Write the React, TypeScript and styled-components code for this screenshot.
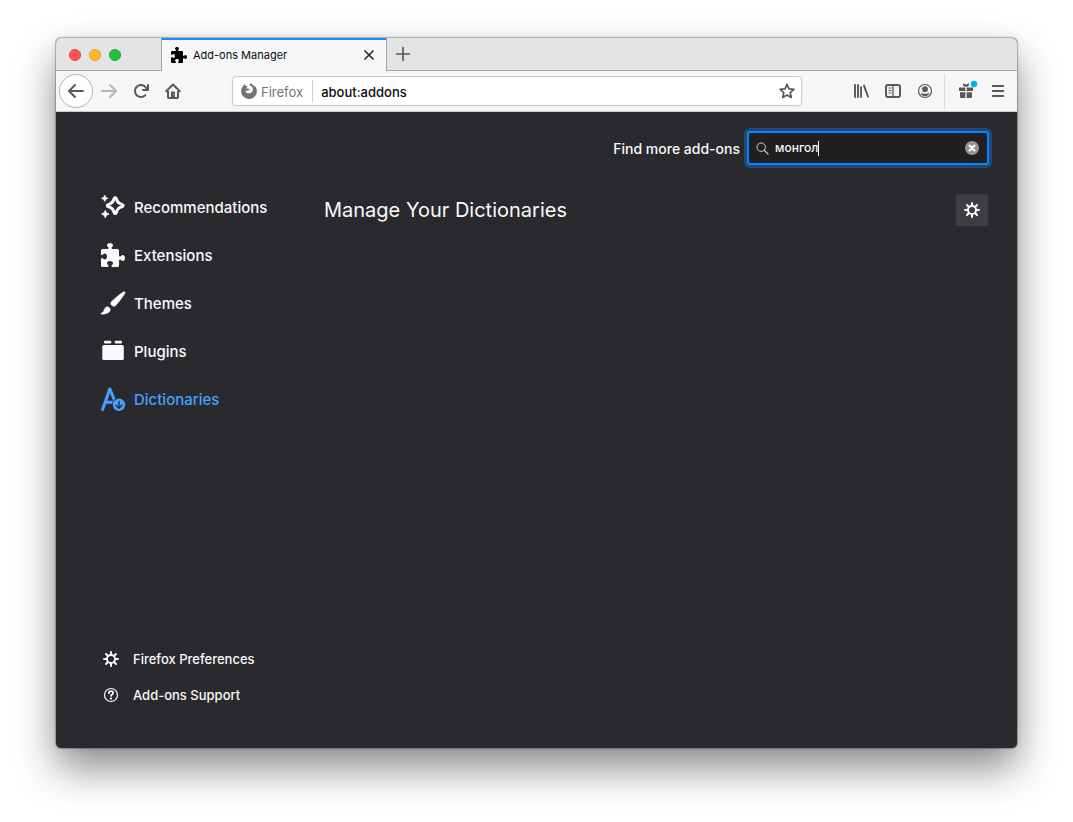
import React from "react";
import styled, { createGlobalStyle, css } from "styled-components";

const GlobalStyle = createGlobalStyle`
  *, *::before, *::after { box-sizing: border-box; }
  body {
    margin: 0;
    background: #fff;
    font-family: Inter, "Liberation Sans", sans-serif;
  }
  button, input { font: inherit; color: inherit; margin: 0; padding: 0; border: 0; background: none; }
  svg { display: block; flex: none; overflow: visible; }
`;

const Desktop = styled.div`
  display: flex;
  min-height: 100vh;
  padding: 38px 56px 74px;
`;

const BrowserWindow = styled.div`
  flex: 1;
  min-width: 0;
  display: flex;
  flex-direction: column;
  border-radius: 5px;
  overflow: hidden;
  background: #2a2a2e;
  box-shadow: 0 0 1px 1px rgba(0, 0, 0, 0.26), 0 0 8px rgba(0, 0, 0, 0.06), 0 20px 40px rgba(0, 0, 0, 0.46);
`;

/* Tab strip */
const TabStrip = styled.div`
  display: flex;
  height: 33px;
  background: #e2e3e5;
`;

const WindowControls = styled.div`
  display: flex;
  align-items: center;
  gap: 8px;
  width: 105px;
  padding: 1px 0 0 13px;
  border-bottom: 1px solid #a5a6a9;
`;

const Light = styled.button<{ $fill: string; $edge: string }>`
  width: 12px;
  height: 12px;
  border-radius: 50%;
  background: ${(p) => p.$fill};
  border: 1px solid ${(p) => p.$edge};
`;

const Tab = styled.div`
  display: flex;
  align-items: center;
  width: 226px;
  padding: 0 9px;
  gap: 6px;
  background: #f5f6f7;
  border: solid #a5a6a9;
  border-width: 0 1px;
  box-shadow: inset 0 2px #2187f7;
`;

const TabTitle = styled.span`
  flex: 1;
  font-size: 11px;
  line-height: 16px;
  color: #0c0c0d;
`;

const TabFill = styled.div`
  flex: 1;
  display: flex;
  align-items: center;
  padding-left: 8px;
  border-bottom: 1px solid #a5a6a9;
`;

const IconButton = styled.button<{ $size?: number; $faded?: boolean }>`
  display: flex;
  align-items: center;
  justify-content: center;
  flex: none;
  width: ${(p) => p.$size ?? 32}px;
  height: ${(p) => p.$size ?? 32}px;
  color: #58585a;
  opacity: ${(p) => (p.$faded ? 0.4 : 1)};
`;

const CloseButton = styled(IconButton)`
  color: #2a2a2b;
`;

/* Navigation toolbar */
const Toolbar = styled.div`
  display: flex;
  align-items: center;
  height: 41px;
  padding: 0 3px;
  background: #f5f6f7;
  border-bottom: 1px solid #cccccd;
`;

const BackButton = styled(IconButton)`
  border: 1px solid #b5b5b7;
  border-radius: 50%;
  background: #fdfdfd;
`;

const UrlBar = styled.div`
  flex: 1;
  display: flex;
  align-items: center;
  height: 30px;
  margin: 0 43px;
  padding: 0 6px 0 8px;
  background: #fff;
  border: 1px solid #c9c9cb;
  border-radius: 4px;
  box-shadow: 0 1px 3px rgba(0, 0, 0, 0.05);
`;

const Identity = styled.span`
  display: flex;
  align-items: center;
  gap: 4px;
  height: 22px;
  padding-right: 9px;
  border-right: 1px solid #d3d3d5;
  font-size: 13px;
  line-height: 20px;
  color: #737373;
`;

const IdentityName = styled.span`
  padding-top: 2px;
`;

const UrlInput = styled.input`
  flex: 1;
  min-width: 0;
  margin-left: 8px;
  padding-top: 2px;
  font-size: 13px;
  font-weight: 500;
  line-height: 20px;
  color: #0c0c0d;
  outline: none;
`;

const Divider = styled.span`
  width: 1px;
  height: 34px;
  margin: 0 5px 0 3px;
  background: #d9d9db;
`;

/* Page */
const Page = styled.div`
  flex: 1;
  display: flex;
  color: #f9f9fa;
`;

const Sidebar = styled.aside`
  display: flex;
  flex-direction: column;
  width: 268px;
  padding: 71px 0 35px 45px;
`;

const Categories = styled.nav`
  display: flex;
  flex-direction: column;
`;

const Category = styled.button<{ $selected?: boolean }>`
  display: flex;
  align-items: center;
  gap: 9px;
  height: 48px;
  font-size: 15px;
  font-weight: 500;
  line-height: 24px;
  ${(p) => p.$selected && css`color: #45a1ff;`}
`;

const CategoryName = styled.span`
  padding-top: 2px;
`;

const FooterLinks = styled.nav`
  display: flex;
  flex-direction: column;
  margin-top: auto;
  padding-left: 2px;
`;

const FooterLink = styled.a`
  display: flex;
  align-items: center;
  gap: 14px;
  height: 36px;
  font-size: 13px;
  font-weight: 500;
  line-height: 20px;
  color: inherit;
  text-decoration: none;
`;

const Main = styled.main`
  flex: 1;
  min-width: 0;
  padding: 20px 29px 0 0;
`;

const SearchRow = styled.form`
  display: flex;
  align-items: center;
  justify-content: flex-end;
  gap: 8px;
`;

const SearchLabel = styled.label`
  padding-top: 2px;
  font-size: 14px;
  font-weight: 500;
  line-height: 20px;
`;

const SearchBox = styled.div`
  display: flex;
  align-items: center;
  width: 240px;
  height: 32px;
  padding: 0 7px;
  background: #202023;
  border: 1px solid #0a84ff;
  border-radius: 2px;
  box-shadow: 0 0 0 1px #0a84ff, 0 0 0 4px rgba(10, 132, 255, 0.35);
`;

const SearchInput = styled.input`
  field-sizing: content;
  margin-left: 6px;
  font-size: 12px;
  font-weight: 500;
  line-height: 16px;
  outline: none;
  caret-color: transparent;
`;

const Caret = styled.span`
  width: 1px;
  height: 15px;
  background: #fff;
`;

const ClearButton = styled(IconButton)`
  margin-left: auto;
`;

const HeadingRow = styled.div`
  display: flex;
  align-items: center;
  justify-content: space-between;
  margin-top: 30px;
`;

const Heading = styled.h1`
  margin: 0;
  font-size: 20px;
  line-height: 32px;
  font-weight: 400;
`;

const OptionsButton = styled(IconButton)`
  color: #f9f9fa;
  background: #3e3e42;
  border-radius: 2px;
`;

/* Icons */
type IconProps = { size?: number; box?: number; children: React.ReactNode };
const Icon = ({ size = 16, box = 16, children }: IconProps) => (
  <svg width={size} height={size} viewBox={`0 0 ${box} ${box}`} fill="currentColor" aria-hidden="true">
    {children}
  </svg>
);

const arrowPath =
  "M15 7H3.414l4.293-4.293a1 1 0 0 0-1.414-1.414l-6 6a1 1 0 0 0 0 1.414l6 6a1 1 0 0 0 1.414-1.414L3.414 9H15a1 1 0 0 0 0-2z";

const BackIcon = () => <Icon><path d={arrowPath} /></Icon>;
const ForwardIcon = () => <Icon><path d={arrowPath} transform="matrix(-1 0 0 1 16 0)" /></Icon>;
const ReloadIcon = () => (
  <Icon>
    <path d="M15 1a1 1 0 0 0-1 1v2.418A6.995 6.995 0 1 0 8 15a6.954 6.954 0 0 0 4.95-2.05 1 1 0 0 0-1.414-1.414A5.019 5.019 0 1 1 12.549 6H10a1 1 0 0 0 0 2h5a1 1 0 0 0 1-1V2a1 1 0 0 0-1-1z" />
  </Icon>
);
const HomeIcon = () => (
  <Icon>
    <path d="M1.2 8.3 8 1.5l6.8 6.8" fill="none" stroke="currentColor" strokeWidth="2" strokeLinecap="round" strokeLinejoin="round" />
    <path d="M3 8v6.2a.8.8 0 0 0 .8.8h8.400a.8.8 0 0 0 .8-.8V8" fill="none" stroke="currentColor" strokeWidth="2" />
    <path d="M6 14.500V9.500a1 1 0 0 1 1-1h2a1 1 0 0 1 1 1v5z" />
    <circle cx="8.700" cy="11.500" r=".6" fill="#f5f6f7" />
  </Icon>
);
const PuzzleIcon = ({ size }: { size: number }) => (
  <Icon size={size}>
    <path d="M14.5 8c-.971 0-1 1-1.75 1a.765.765 0 0 1-.75-.75V5a1 1 0 0 0-1-1H7.75A.765.765 0 0 1 7 3.25c0-.75 1-.779 1-1.75C8 .635 7.1 0 6 0S4 .635 4 1.5c0 .971 1 1 1 1.75a.765.765 0 0 1-.75.75H1a1 1 0 0 0-1 1v2.250A.765.765 0 0 0 .75 8c.75 0 .779-1 1.750-1C3.365 7 4 7.900 4 9s-.635 2-1.500 2c-.971 0-1-1-1.750-1a.765.765 0 0 0-.75.75V15a1 1 0 0 0 1 1h3.250a.765.765 0 0 0 .75-.75c0-.75-1-.779-1-1.750 0-.865.9-1.500 2-1.500s2 .635 2 1.500c0 .971-1 1-1 1.750a.765.765 0 0 0 .75.75H11a1 1 0 0 0 1-1v-3.250a.765.765 0 0 1 .75-.75c.75 0 .779 1 1.750 1 .865 0 1.500-.9 1.500-2s-.635-2-1.500-2z" />
  </Icon>
);
const CrossIcon = () => (
  <Icon size={10} box={10}>
    <path d="m1 1 8 8M9 1 1 9" stroke="currentColor" strokeWidth="1.700" strokeLinecap="round" />
  </Icon>
);
const PlusIcon = () => (
  <Icon><path d="M8 1.700v12.600M1.700 8h12.600" stroke="currentColor" strokeWidth="1.700" strokeLinecap="round" /></Icon>
);
const FirefoxIcon = () => (
  <Icon>
    <path d="M15.800 7.300c-.2-2-1.300-4-2.700-5.100.3.600.5 1.100.5 1.600C12.600 2.100 10.900 1.400 9.900 0c-.7.5-1.200 1.500-1.300 2.600 1.700.3 3 1.500 3.300 3.200.400 2.300-1.200 4.300-3.500 4.500-2.200.1-3.800-1.200-4-2.900.6.500 1.500.6 2.200.2.7-.3 1.100-.8 1.700-.8.4 0 .6-.4.3-.7-.5-.6-1.200-.8-1.900-.6-.6.200-1.100.2-1.600-.2 0-.5.900-1 1.400-1.300.1-.5.100-.9-.1-1.100-.9 0-1.600-.1-2.200-.5-.4-.4-.6-1-.6-1.500C2.800 1.400 2.300 2.200 2.200 3 1 4.300.1 6.100.1 8.100.1 12.500 3.700 16 8 16c4.600 0 8.300-3.900 7.800-8.700z" />
  </Icon>
);
const StarIcon = () => (
  <Icon>
    <path d="m8 1.300 2 4.500 4.900.5-3.700 3.300 1.100 4.900L8 12l-4.300 2.500 1.100-4.900L1.100 6.300 6 5.800z" fill="none" stroke="currentColor" strokeWidth="1.700" strokeLinejoin="round" />
  </Icon>
);
const LibraryIcon = () => (
  <Icon>
    <path d="M2 2v12M5 2v12M8 4.200v9.800M11 2.600l4 11.200" fill="none" stroke="currentColor" strokeWidth="1.900" strokeLinecap="round" />
  </Icon>
);
const SidebarIcon = () => (
  <Icon>
    <rect x="1" y="2" width="14" height="12" rx="2" fill="none" stroke="currentColor" strokeWidth="2" />
    <path d="M8 2v12" stroke="currentColor" strokeWidth="1.300" />
    <path d="M3.500 5h3M3.500 7.500h3M3.500 10h3" stroke="currentColor" />
  </Icon>
);
const AccountIcon = () => (
  <Icon>
    <circle cx="8" cy="8" r="6.500" fill="none" stroke="currentColor" strokeWidth="1.200" />
    <circle cx="8" cy="6.200" r="2.900" />
    <path d="M3.600 9.700c1 .6 2.500 1 4.400 1s3.400-.4 4.400-1c-.4 2-2.200 3.500-4.400 3.500s-4-1.500-4.400-3.500z" />
  </Icon>
);
const GiftIcon = () => (
  <Icon size={20} box={20}>
    <path d="M3 6.500h6.300V10H3zM10.700 6.500H17V10h-6.300zM4 11.200h5.300V17H5a1 1 0 0 1-1-1zM10.700 11.200H16V16a1 1 0 0 1-1 1h-4.300z" />
    <path d="M7 2.500c1 0 1.900.4 2.500 1h1c.6-.6 1.500-1 2.500-1 .4 1.600-.6 3.200-2.300 3.200H9.300C7.600 5.700 6.600 4.100 7 2.500z" />
    <circle cx="18" cy="3" r="3.200" fill="#00b0fa" />
  </Icon>
);
const MenuIcon = () => (
  <Icon><path d="M2.800 3h10.400M2.800 8h10.400M2.800 13h10.400" stroke="currentColor" strokeWidth="2" strokeLinecap="round" /></Icon>
);
const GearIcon = () => (
  <Icon>
    <circle cx="8" cy="8" r="4.100" fill="none" stroke="currentColor" strokeWidth="2" />
    <path
      d="M8 1v2.800M8 12.200V15M1 8h2.800M12.200 8H15M3 3l2 2M11 11l2 2M13 3l-2 2M5 11l-2 2"
      stroke="currentColor"
      strokeWidth="2"
      strokeLinecap="round"
    />
  </Icon>
);
const HelpIcon = () => (
  <Icon>
    <circle cx="8" cy="8" r="6.500" fill="none" stroke="currentColor" strokeWidth="1.200" />
    <path d="M5.900 6.200C5.900 4.900 6.800 4.100 8 4.100s2.100.8 2.100 1.900c0 1.500-2.100 1.600-2.100 3" fill="none" stroke="currentColor" strokeWidth="1.700" strokeLinecap="round" />
    <circle cx="8" cy="11.600" r="1.100" />
  </Icon>
);
const SearchIcon = () => (
  <Icon size={13} box={13}>
    <path d="M8.300 8.300 12 12" stroke="#d0d0d1" strokeWidth="1.200" strokeLinecap="round" />
    <circle cx="5.200" cy="5.200" r="4.200" fill="none" stroke="#d0d0d1" />
  </Icon>
);
const ClearIcon = () => (
  <Icon>
    <circle cx="8" cy="8" r="7" fill="#949496" />
    <path d="m5.500 5.500 5 5M10.500 5.500l-5 5" stroke="#fff" strokeWidth="1.900" strokeLinecap="round" />
  </Icon>
);
const SparkleIcon = () => (
  <Icon size={24} box={24}>
    <path d="M14.200 2.700c.7 0 1 .5 1.200 1.200.9 3.400 2.100 4.600 5.500 5.500 1.700.4 1.700 2 0 2.400-3.400.9-4.600 2.100-5.500 5.500-.4 1.700-2 1.700-2.400 0-.9-3.400-2.100-4.600-5.500-5.500-1.700-.4-1.700-2 0-2.400 3.400-.9 4.600-2.100 5.500-5.500.2-.7.500-1.200 1.200-1.200z" fill="none" stroke="currentColor" strokeWidth="3" />
    <path d="M3.700.3 4.700 2.400l2.100.9-2.100 1-1 2.100-1-2.100-2.100-1 2.100-.9zM4.300 15.400l1.200 2.500 2.500 1.100-2.500 1.200-1.200 2.500-1.200-2.500L.6 19l2.500-1.100z" stroke="currentColor" strokeWidth=".9" strokeLinejoin="round" />
  </Icon>
);
const BrushIcon = () => (
  <Icon size={24} box={24}>
    <path d="M22.300.9c1.300-.7 2.300.3 1.600 1.600-2.600 4-6 8.500-9.200 11.900-.8.800-1.700 1-2.700.7-1-.3-1.900-1.200-2.200-2.200-.2-.8 0-1.600.7-2.300C14 7.300 18.300 3.400 22.300.9z" stroke="currentColor" strokeWidth=".5" />
    <path d="M5.400 15.900c1.500-.7 3.500.5 3.800 2.200.3 1.900-.9 3.300-2.900 4.100-1.900.8-4 1.200-5.700 1-.8-.1-.8-1 0-1.300 1.500-.6 2-1.400 2.500-2.800.5-1.500 1-2.600 2.300-3.200z" stroke="currentColor" strokeWidth=".5" />
  </Icon>
);
const PluginIcon = () => (
  <Icon size={24} box={24}>
    <rect x="3" y="1.700" width="7.300" height="2.800" rx="1.200" />
    <rect x="13.700" y="1.700" width="7.300" height="2.800" rx="1.200" />
    <rect x="1.300" y="6" width="21.500" height="15" rx="1.500" />
  </Icon>
);
const DictionaryIcon = () => (
  <Icon size={24} box={24}>
    <path d="M1.600 22.600 8.800 1.900 13.600 13.500M4 15.300h8" fill="none" stroke="currentColor" strokeWidth="3" strokeLinecap="round" strokeLinejoin="round" />
    <circle cx="18" cy="17.800" r="7" fill="#2a2a2e" />
    <circle cx="18" cy="17.800" r="6.200" />
    <path d="M18 14.300v6.400M15 18.300l3 2.900 3-2.900" fill="none" stroke="#2a2a2e" strokeWidth="1.300" strokeLinecap="round" strokeLinejoin="round" />
  </Icon>
);

const categories = [
  { label: "Recommendations", icon: <SparkleIcon /> },
  { label: "Extensions", icon: <PuzzleIcon size={24} /> },
  { label: "Themes", icon: <BrushIcon /> },
  { label: "Plugins", icon: <PluginIcon /> },
  { label: "Dictionaries", icon: <DictionaryIcon />, selected: true },
];

export default function App() {
  return (
    <Desktop>
      <GlobalStyle />
      <BrowserWindow>
        <TabStrip>
          <WindowControls>
            <Light $fill="#ff544d" $edge="#e2453f" aria-label="Close window" />
            <Light $fill="#ffb429" $edge="#e09e22" aria-label="Minimize window" />
            <Light $fill="#25c138" $edge="#1cab2c" aria-label="Zoom window" />
          </WindowControls>
          <Tab>
            <PuzzleIcon size={16} />
            <TabTitle>Add-ons Manager</TabTitle>
            <CloseButton $size={16} aria-label="Close tab"><CrossIcon /></CloseButton>
          </Tab>
          <TabFill>
            <IconButton $size={16} aria-label="New tab"><PlusIcon /></IconButton>
          </TabFill>
        </TabStrip>

        <Toolbar>
          <BackButton $size={34} aria-label="Back"><BackIcon /></BackButton>
          <IconButton $faded aria-label="Forward"><ForwardIcon /></IconButton>
          <IconButton aria-label="Reload"><ReloadIcon /></IconButton>
          <IconButton aria-label="Home"><HomeIcon /></IconButton>
          <UrlBar>
            <Identity><FirefoxIcon /><IdentityName>Firefox</IdentityName></Identity>
            <UrlInput aria-label="Address" defaultValue="about:addons" />
            <IconButton $size={16} aria-label="Bookmark this page"><StarIcon /></IconButton>
          </UrlBar>
          <IconButton aria-label="Library"><LibraryIcon /></IconButton>
          <IconButton aria-label="Sidebars"><SidebarIcon /></IconButton>
          <IconButton aria-label="Account"><AccountIcon /></IconButton>
          <Divider />
          <IconButton aria-label="What's new"><GiftIcon /></IconButton>
          <IconButton aria-label="Menu"><MenuIcon /></IconButton>
        </Toolbar>

        <Page>
          <Sidebar>
            <Categories>
              {categories.map((c) => (
                <Category key={c.label} $selected={c.selected}>
                  {c.icon}
                  <CategoryName>{c.label}</CategoryName>
                </Category>
              ))}
            </Categories>
            <FooterLinks>
              <FooterLink href="#preferences"><GearIcon />Firefox Preferences</FooterLink>
              <FooterLink href="#support"><HelpIcon />Add-ons Support</FooterLink>
            </FooterLinks>
          </Sidebar>
          <Main>
            <SearchRow>
              <SearchLabel htmlFor="addon-search">Find more add-ons</SearchLabel>
              <SearchBox>
                <SearchIcon />
                <SearchInput id="addon-search" defaultValue="монгол" />
                <Caret />
                <ClearButton type="button" $size={16} aria-label="Clear search"><ClearIcon /></ClearButton>
              </SearchBox>
            </SearchRow>
            <HeadingRow>
              <Heading>Manage Your Dictionaries</Heading>
              <OptionsButton aria-label="Tools"><GearIcon /></OptionsButton>
            </HeadingRow>
          </Main>
        </Page>
      </BrowserWindow>
    </Desktop>
  );
}
